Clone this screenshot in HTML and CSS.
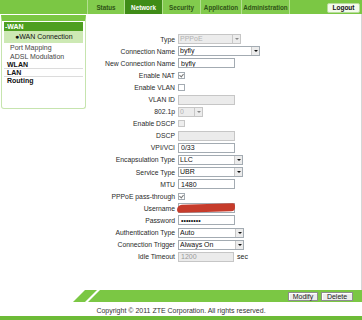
FILE: index.html
```html
<!DOCTYPE html>
<html lang="en">

<head>
    <meta charset="UTF-8">
    <meta name="viewport" content="width=device-width, initial-scale=1.0">
    <title>WAN Connection</title>
    <link rel="stylesheet" href="styles.css">
</head>

<body>

    <header class="topbar">
        <div class="topbar-space"></div>
        <nav class="tabs">
            <a class="tab tab-status" href="#">Status</a>
            <a class="tab tab-network active" href="#">Network</a>
            <a class="tab tab-security" href="#">Security</a>
            <a class="tab tab-application" href="#">Application</a>
            <a class="tab tab-admin" href="#">Administration</a>
        </nav>
        <a class="logout" href="#">Logout</a>
    </header>

    <div class="page">
        <aside class="sidebar">
            <div class="menu">
                <div class="menu-head">-WAN</div>
                <div class="menu-item active">&#9679;WAN Connection</div>
                <div class="menu-item">Port Mapping</div>
                <div class="menu-item">ADSL Modulation</div>
                <div class="menu-group">WLAN</div>
                <div class="menu-group">LAN</div>
                <div class="menu-group last">Routing</div>
            </div>
        </aside>

        <main class="content">
            <form class="form" id="wanForm">
                <label>Type</label>
                <span class="select disabled w-type"><select disabled><option>PPPoE</option></select><span class="arrow"></span></span>

                <label>Connection Name</label>
                <span class="select w-conn"><select><option>byfly</option></select><span class="arrow"></span></span>

                <label>New Connection Name</label>
                <span><input class="input" type="text" value="byfly"></span>

                <label>Enable NAT</label>
                <span class="check checked"></span>

                <label>Enable VLAN</label>
                <span class="check"></span>

                <label>VLAN ID</label>
                <span><input class="input disabled" type="text" disabled></span>

                <label>802.1p</label>
                <span class="select disabled w-prio"><select disabled><option>0</option></select><span class="arrow"></span></span>

                <label>Enable DSCP</label>
                <span class="check disabled"></span>

                <label>DSCP</label>
                <span><input class="input disabled" type="text" disabled></span>

                <label>VPI/VCI</label>
                <span><input class="input" type="text" value="0/33"></span>

                <label>Encapsulation Type</label>
                <span class="select w-mid"><select><option>LLC</option></select><span class="arrow"></span></span>

                <label>Service Type</label>
                <span class="select w-mid"><select><option>UBR</option></select><span class="arrow"></span></span>

                <label>MTU</label>
                <span><input class="input" type="text" value="1480"></span>

                <label>PPPoE pass-through</label>
                <span class="check checked"></span>

                <label>Username</label>
                <span class="field"><input class="input" type="text" value=""><span class="redact"></span></span>

                <label>Password</label>
                <span><input class="input" type="password" value="12345678"></span>

                <label>Authentication Type</label>
                <span class="select w-wide"><select><option>Auto</option></select><span class="arrow"></span></span>

                <label>Connection Trigger</label>
                <span class="select w-wide"><select><option>Always On</option></select><span class="arrow"></span></span>

                <label>Idle Timeout</label>
                <span class="field-unit"><input class="input disabled short" type="text" value="1200" disabled><span class="unit">sec</span></span>
            </form>
        </main>
    </div>

    <div class="actions">
        <button type="button" class="btn btn-modify">Modify</button>
        <button type="button" class="btn btn-delete">Delete</button>
    </div>

    <footer class="footer">Copyright &copy; 2011 ZTE Corporation. All rights reserved.</footer>
    <div class="bottom-strip"></div>

</body>
</html>
```

FILE: styles.css
```css
* {
    box-sizing: border-box;
}

body {
    font-family: 'Liberation Sans', Arial, sans-serif;
    font-size: 7px;
    color: #222;
    background-color: #fff;
    margin: 0;
    width: 362px;
    height: 320px;
    overflow: hidden;
}

/* top navigation */
.topbar {
    display: flex;
    height: 14px;
    background-color: #7bc744;
}

.topbar-space {
    width: 87px;
}

.tabs {
    display: flex;
}

.tab {
    display: flex;
    align-items: center;
    justify-content: center;
    height: 14px;
    font-size: 6.3px;
    font-weight: bold;
    color: #2f5316;
    text-decoration: none;
    white-space: nowrap;
    background-color: #82cb4d;
    border-left: 1px solid #b3e091;
}

.tab.active {
    background-color: #3f8c17;
    color: #fff;
}

.tab-status { width: 37px; }
.tab-network { width: 38px; }
.tab-security { width: 38px; }
.tab-application { width: 41px; }
.tab-admin { width: 49px; border-right: 1px solid #b3e091; }

.logout {
    margin: 3px 2px 0 auto;
    width: 33px;
    height: 10px;
    background-color: #f3faec;
    border: 1px solid #b9dd9c;
    border-radius: 2px;
    color: #111;
    font-size: 6.5px;
    font-weight: bold;
    text-decoration: none;
    text-align: center;
    line-height: 8px;
}

/* page body */
.page {
    display: flex;
    height: 276px;
}

.sidebar {
    width: 87px;
    padding: 1px 1px 0 1px;
}

.menu {
    height: 94px;
    border: 1px solid #c6e4ae;
    border-top: 6px solid #7bc744;
    border-radius: 0 0 3px 3px;
    padding: 1px 2px;
}

.menu-head {
    height: 9px;
    line-height: 9px;
    background-color: #4e9f20;
    color: #fff;
    font-weight: bold;
    padding-left: 1px;
}

.menu-item {
    height: 9px;
    line-height: 9px;
    padding-left: 6px;
    color: #444;
}

.menu-item.active {
    height: 12px;
    line-height: 12px;
    background-color: #cde9b4;
    padding-left: 11px;
    color: #111;
}

.menu-group {
    height: 8px;
    line-height: 8px;
    padding-left: 3px;
    font-weight: bold;
    color: #111;
    border-bottom: 1px solid #dcdcdc;
}

.menu-group.last {
    border-bottom: none;
}

.content {
    flex: 1;
    border-right: 1px solid #d6d6d6;
    padding-top: 19px;
}

/* form grid */
.form {
    display: grid;
    grid-template-columns: 88px auto;
    column-gap: 3px;
    grid-auto-rows: 12.1px;
    align-items: center;
}

.form label {
    text-align: right;
    font-size: 6.8px;
    color: #2a2a2a;
    white-space: nowrap;
}

.form > span {
    display: flex;
    align-items: center;
}

.input {
    width: 57px;
    height: 10px;
    border: 1px solid #a3abb2;
    padding: 0 2px;
    font-family: inherit;
    font-size: 7px;
    color: #111;
    background-color: #fff;
    outline: none;
}

.input.disabled {
    background-color: #ebebeb;
    border-color: #c6c6c6;
    color: #999;
}

.input.short {
    width: 56px;
}

.unit {
    margin-left: 3px;
}

.field {
    position: relative;
}

.redact {
    position: absolute;
    left: -1px;
    top: 1px;
    width: 58px;
    height: 8px;
    background-color: #c63b2b;
    border-radius: 5px 2px 4px 3px;
    transform: rotate(-1.5deg);
}

.select {
    display: flex;
    height: 10px;
    border: 1px solid #a3abb2;
    background-color: #fff;
}

.select select {
    flex: 1;
    min-width: 0;
    appearance: none;
    -webkit-appearance: none;
    border: none;
    background: transparent;
    font-family: inherit;
    font-size: 7px;
    color: #111;
    padding: 0 1px;
    height: 8px;
    line-height: 8px;
    outline: none;
}

.select .arrow {
    width: 8px;
    height: 8px;
    background-color: #ececec;
    border-left: 1px solid #c8c8c8;
    position: relative;
}

.select .arrow::after {
    content: '';
    position: absolute;
    left: 2px;
    top: 3px;
    border-left: 2px solid transparent;
    border-right: 2px solid transparent;
    border-top: 2px solid #111;
}

.select.disabled {
    background-color: #ececec;
    border-color: #c6c6c6;
}

.select.disabled select {
    color: #9a9a9a;
}

.select.disabled .arrow::after {
    border-top-color: #888;
}

.w-type { width: 63px; }
.w-conn { width: 82px; }
.w-prio { width: 25px; }
.w-mid { width: 65px; }
.w-wide { width: 66px; }

.check {
    width: 7px;
    height: 7px;
    border: 1px solid #a3abb2;
    background-color: #fff;
    position: relative;
}

.check.disabled {
    background-color: #eee;
    border-color: #c6c6c6;
}

.check.checked::after {
    content: '';
    position: absolute;
    left: 1px;
    top: 0;
    width: 2px;
    height: 3px;
    border-right: 1px solid #777;
    border-bottom: 1px solid #777;
    transform: rotate(40deg);
}

/* action bar */
.actions {
    position: relative;
    display: flex;
    justify-content: flex-end;
    align-items: center;
    gap: 3px;
    height: 12px;
    margin-left: 73px;
    padding-right: 9px;
    background-color: #7bc744;
    clip-path: polygon(12px 0, 100% 0, 100% 100%, 0 100%);
}

.actions::before {
    content: '';
    position: absolute;
    left: 12px;
    top: 0;
    width: 3px;
    height: 12px;
    background-color: #fff;
    transform-origin: bottom left;
    transform: skewX(-45deg);
}

.btn {
    height: 9px;
    padding: 0;
    font-family: inherit;
    font-size: 7px;
    line-height: 7px;
    color: #222;
    background-color: #ececec;
    border: 1px solid #8d8d8d;
    box-shadow: inset 1px 1px 0 #fff;
    cursor: pointer;
}

.btn-modify { width: 30px; }
.btn-delete { width: 32px; }

.footer {
    height: 14px;
    padding-top: 4px;
    line-height: 10px;
    text-align: center;
    color: #333;
}

.bottom-strip {
    height: 4px;
    background-color: #6dbb37;
}
```
